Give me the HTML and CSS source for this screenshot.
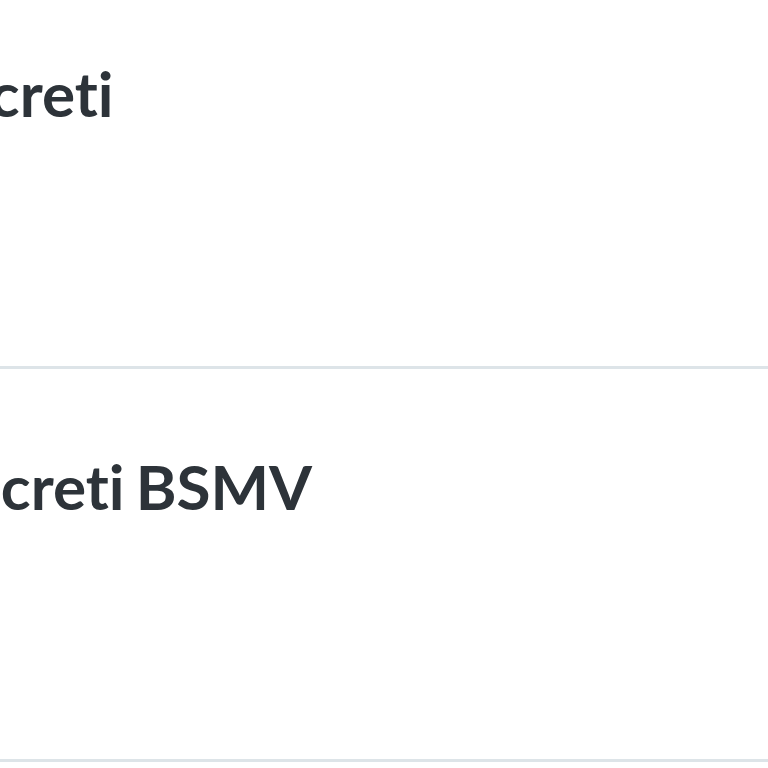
FILE: index.html
```html
<!DOCTYPE html>
<html lang="it">
<head>
  <meta charset="UTF-8">
  <meta name="viewport" content="width=device-width, initial-scale=1.0">
  <title>Decreti</title>
  <link rel="stylesheet" href="styles.css">
</head>
<body>
  <div class="list">
    <div class="row">
      <h2 class="row-title row-title-shifted">Decreti</h2>
    </div>
    <div class="row">
      <h2 class="row-title">Decreti BSMV</h2>
    </div>
  </div>
</body>
</html>
```

FILE: styles.css
```css
body {
  margin: 0;
  background-color: #fff;
  font-family: Lato, "Open Sans", sans-serif;
  color: #2d3339;
  overflow: hidden;
}
.list {
  margin-top: -24px;
}
.row {
  height: 315px;
  padding-top: 75px;
  border-bottom: 3px solid #dde4e8;
}
.row-title {
  margin: 0 0 0 -79px;
  font-size: 62px;
  font-weight: 700;
  word-spacing: -4px;
  font-variant-ligatures: none;
  line-height: 84px;
  white-space: nowrap;
}
.row-title-shifted {
  margin-left: -90px;
}
```
